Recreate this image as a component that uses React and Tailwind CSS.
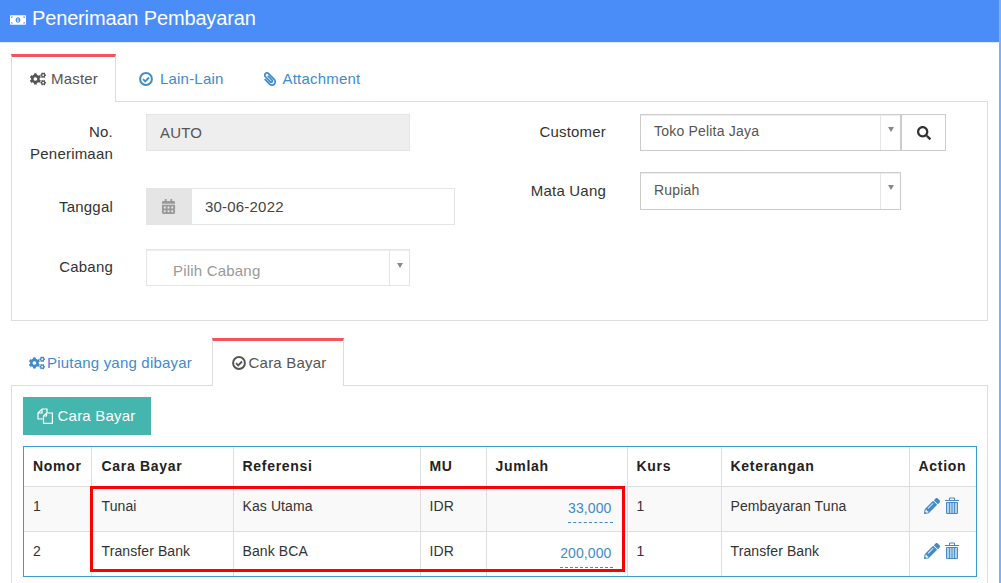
import React from 'react';
import { FaCogs, FaPaperclip, FaSearch, FaCalendarAlt, FaPencilAlt, FaMoneyBillAlt } from 'react-icons/fa';

const CheckCircle = () => (
    <svg width="14" height="14" viewBox="0 0 14 14" fill="none">
        <circle cx="7" cy="7" r="5.900" stroke="currentColor" strokeWidth="2" />
        <path d="M4 7.200l2.200 2.200L10 5.500" stroke="currentColor" strokeWidth="1.800" />
    </svg>
);

const FilesIcon = () => (
    <svg width="16" height="16" viewBox="0 0 16 16" fill="none" stroke="currentColor" strokeWidth="1.200">
        <path d="M6 11H1V5l4-4h5v4" />
        <path d="M5 1v4H1" />
        <path d="M6.500 15.400V8l3-3h5.900v10.400z" />
        <path d="M9.500 5v3h-3" />
    </svg>
);

const TrashIcon = () => (
    <svg width="14" height="17" viewBox="0 0 14 17" fill="none" className="text-[#428bca] -mt-[2px]">
        <path d="M0 3.500h14M4.500 3V1h5v2" stroke="currentColor" strokeWidth="1" />
        <path d="M1.500 5.500h11v11h-11z" fill="#b5d2ec" stroke="currentColor" strokeWidth="1" />
        <path d="M4.500 6v10M7 6v10M9.500 6v10" stroke="#4a90cf" strokeWidth="1" />
    </svg>
);

const Caret = () => (
    <span className="w-0 h-0 border-x-[3.5px] border-x-transparent border-t-[5px] border-t-[#888]" />
);

const rows = [
    { no: 1, cara: 'Tunai', ref: 'Kas Utama', jumlah: '33,000', ket: 'Pembayaran Tuna' },
    { no: 2, cara: 'Transfer Bank', ref: 'Bank BCA', jumlah: '200,000', ket: 'Transfer Bank' },
];

const App = () => {
    return (
        <div className="w-[1001px] h-[583px] overflow-hidden bg-white border-r-2 border-r-[#7fb0f5] font-['Liberation_Sans',Arial,sans-serif] text-sm text-[#333]">
            <div className="h-[43px] bg-[#4b8df8] border-b border-[#dfe9f8] flex items-center pl-[10px] text-white text-[20px] tracking-[-0.15px] gap-[6px] pb-[5px]">
                <FaMoneyBillAlt size={16} className="mt-[3px]" />
                <span>Penerimaan Pembayaran</span>
            </div>

            <div className="pl-[11px] pr-[11px] pt-[11px] tracking-[0.2px]">
                <div className="flex h-[48px] border-b border-[#ddd]">
                    <div className="w-[105px] h-[48px] bg-white border-x border-[#ddd] border-t-[3px] border-t-[#f2545f] flex items-center justify-center gap-[5px] text-[#555] text-[15px] pb-[1px] pl-[1px]">
                        <FaCogs size={16} />
                        <span>Master</span>
                    </div>
                    <div className="flex items-center gap-[7px] ml-[23px] text-[#428bca] text-[15px] pt-[2px]">
                        <CheckCircle />
                        <span>Lain-Lain</span>
                    </div>
                    <div className="flex items-center gap-[6px] ml-[39px] text-[#428bca] text-[15px] pt-[2px]">
                        <FaPaperclip size={14} className="-scale-x-100" />
                        <span>Attachment</span>
                    </div>
                </div>

                <div className="h-[219px] border-x border-b border-[#ddd] flex text-[15px]">
                    <div className="w-[480px] pt-[12px]">
                        <div className="flex h-[37px]">
                            <div className="w-[101px] h-[60px] shrink-0 text-right leading-[22px] pt-[7px]">No.<br />Penerimaan</div>
                            <div className="ml-[33px] w-[264px] h-[37px] bg-[#eee] border border-[#e5e5e5] flex items-center pl-[13px] text-[#555]">AUTO</div>
                        </div>
                        <div className="flex mt-[37px] items-center">
                            <div className="w-[101px] text-right">Tanggal</div>
                            <div className="ml-[33px] w-[309px] h-[37px] border border-[#e5e5e5] flex items-center text-[#444]">
                                <div className="w-[45px] h-full bg-[#e5e5e5] flex items-center justify-center pr-[2px] text-[#999]">
                                    <FaCalendarAlt size={15} />
                                </div>
                                <span className="pl-[13px]">30-06-2022</span>
                            </div>
                        </div>
                        <div className="flex mt-[24px]">
                            <div className="w-[101px] text-right pt-[7px]">Cabang</div>
                            <div className="ml-[33px] w-[264px] h-[37px] border border-[#e5e5e5] shadow-[inset_0_1px_1px_rgba(0,0,0,0.075)] flex text-[#999]">
                                <span className="flex-1 pl-[26px] pt-[10px]">Pilih Cabang</span>
                                <div className="w-[20px] border-l border-[#e5e5e5] flex justify-center pt-[13px]"><Caret /></div>
                            </div>
                        </div>
                    </div>
                    <div className="flex-1 pt-[12px]">
                        <div className="flex items-center">
                            <div className="w-[114px] text-right pb-[2px]">Customer</div>
                            <div className="ml-[34px] w-[261px] h-[37px] border border-[#ccc] shadow-[inset_0_1px_1px_rgba(0,0,0,0.075)] flex items-center text-[#555] text-sm">
                                <span className="flex-1 pl-[13px] pb-[3px]">Toko Pelita Jaya</span>
                                <div className="w-[20px] h-full border-l border-[#e5e5e5] flex justify-center pt-[12px]"><Caret /></div>
                            </div>
                            <div className="w-[45px] h-[37px] border border-[#ccc] flex items-center justify-center text-[#333]">
                                <FaSearch size={14} />
                            </div>
                        </div>
                        <div className="flex items-center mt-[21px]">
                            <div className="w-[114px] text-right">Mata Uang</div>
                            <div className="ml-[34px] w-[261px] h-[38px] border border-[#ccc] shadow-[inset_0_1px_1px_rgba(0,0,0,0.075)] flex items-center text-[#555] text-sm">
                                <span className="flex-1 pl-[13px] pb-[2px]">Rupiah</span>
                                <div className="w-[20px] h-full border-l border-[#e5e5e5] flex justify-center pt-[12px]"><Caret /></div>
                            </div>
                        </div>
                    </div>
                </div>

                <div className="flex h-[48px] mt-[17px] border-b border-[#ddd]">
                    <div className="w-[201px] flex items-center gap-[2px] pl-[18px] text-[#428bca] text-[15px] pt-[2px]">
                        <FaCogs size={16} />
                        <span>Piutang yang dibayar</span>
                    </div>
                    <div className="w-[132px] h-[48px] bg-white border-x border-[#ddd] border-t-[3px] border-t-[#f2545f] flex items-center justify-center gap-[3px] text-[#555] text-[15px] pb-[1px] pl-[2px]">
                        <CheckCircle />
                        <span>Cara Bayar</span>
                    </div>
                </div>

                <div className="border-x border-[#ddd] h-[200px] pt-[11px] pl-[11px] pr-[11px]">
                    <div className="w-[128px] h-[38px] bg-[#44b6ae] text-white text-[15px] flex items-center justify-center gap-[5px] pr-[2px]">
                        <FilesIcon />
                        <span>Cara Bayar</span>
                    </div>

                    <div className="relative mt-[11px] w-[954px] border border-[#3c9ccb]">
                        <table className="w-full table-fixed border-collapse text-sm tracking-[0.1px]">
                            <thead>
                                <tr className="h-[39px] text-[#222] tracking-[0.7px]">
                                    <th className="w-[67px] text-left font-bold pl-[9px]">Nomor</th>
                                    <th className="w-[142px] text-left font-bold pl-[10px] border-l border-[#ddd]">Cara Bayar</th>
                                    <th className="w-[187px] text-left font-bold pl-[9px] border-l border-[#ddd]">Referensi</th>
                                    <th className="w-[66px] text-left font-bold pl-[9px] border-l border-[#ddd]">MU</th>
                                    <th className="w-[141px] text-left font-bold pl-[9px] border-l border-[#ddd]">Jumlah</th>
                                    <th className="w-[94px] text-left font-bold pl-[9px] border-l border-[#ddd]">Kurs</th>
                                    <th className="w-[188px] text-left font-bold pl-[9px] border-l border-[#ddd]">Keterangan</th>
                                    <th className="text-left font-bold pl-[9px] border-l border-[#ddd]">Action</th>
                                </tr>
                            </thead>
                            <tbody>
                                {rows.map((r, i) => (
                                    <tr key={r.no} className={`h-[45px] border-t border-[#ddd] ${i === 0 ? 'bg-[#f9f9f9]' : 'bg-white'}`}>
                                        <td className="pl-[9px] pb-[5px]">{r.no}</td>
                                        <td className="pl-[10px] pb-[5px] border-l border-[#ddd]">{r.cara}</td>
                                        <td className="pl-[9px] pb-[5px] border-l border-[#ddd]">{r.ref}</td>
                                        <td className="pl-[9px] pb-[5px] border-l border-[#ddd]">IDR</td>
                                        <td className="pr-[14px] pt-[11px] align-top border-l border-[#ddd]">
                                            <span className="block w-fit ml-auto h-[25px] text-[#428bca] border-b border-dashed border-[#428bca] pr-[1px] leading-[20px]">{r.jumlah}</span>
                                        </td>
                                        <td className="pl-[9px] pb-[5px] border-l border-[#ddd]">1</td>
                                        <td className="pl-[9px] pb-[5px] border-l border-[#ddd]">{r.ket}</td>
                                        <td className="pl-[14px] pb-[5px] border-l border-[#ddd]">
                                            <div className="flex items-center gap-[5px] text-[#428bca]">
                                                <FaPencilAlt size={16} />
                                                <TrashIcon />
                                            </div>
                                        </td>
                                    </tr>
                                ))}
                            </tbody>
                        </table>
                        <div className="absolute left-[66px] top-[39px] w-[535px] h-[86px] border-[3px] border-[#ff0000]" />
                    </div>
                </div>
            </div>
        </div>
    );
};

export default App;
